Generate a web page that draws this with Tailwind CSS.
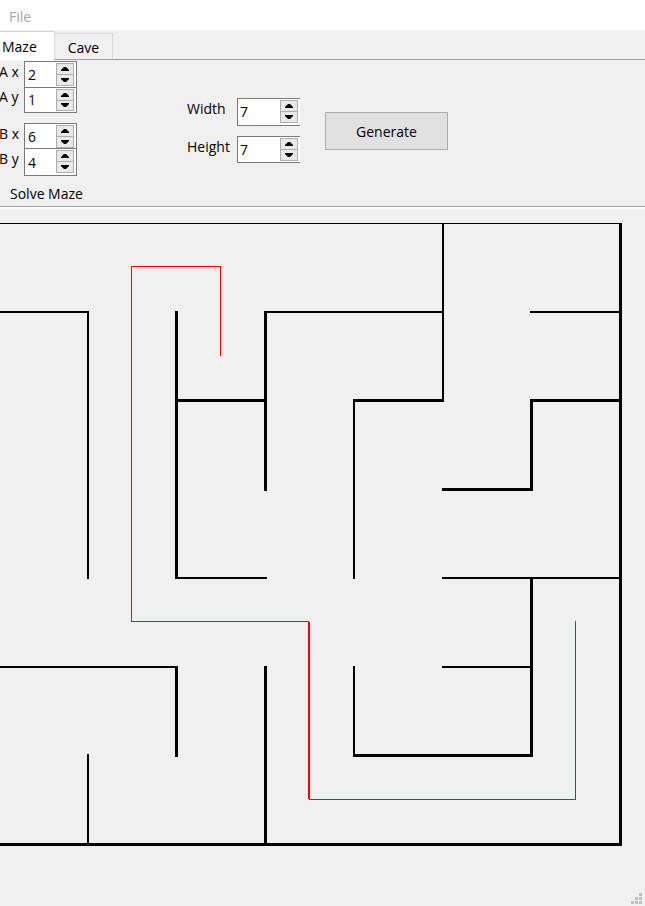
<!DOCTYPE html>
<html lang="en">
<head>
<meta charset="utf-8">
<meta name="viewport" content="width=device-width, initial-scale=1">
<title>Maze</title>
<script src="https://cdn.jsdelivr.net/npm/@tailwindcss/browser@4"></script>
</head>
<body class="min-h-screen flex flex-col bg-[#f0f0f0] text-black text-sm leading-5 font-['Open_Sans','Noto_Sans',sans-serif]">
  <nav class="h-[30px] bg-white flex items-center pl-[9px] pt-1">
    <button type="button" class="text-[#a5a5a5]">File</button>
  </nav>

  <div role="tablist" class="h-[30px] pt-px flex items-end border-b border-[#a0a0a0]">
    <button type="button" role="tab" aria-selected="true" class="h-[30px] w-[55px] -mb-[2px] bg-white border-t border-r border-[#d9d9d9] pl-[2px] text-left">Maze</button>
    <button type="button" role="tab" aria-selected="false" class="h-[26px] w-[58px] border-t border-r border-[#d9d9d9] pt-[2px]">Cave</button>
  </div>

  <main class="flex-1 flex flex-col">
    <section class="h-[146px] pt-px flex items-start" aria-label="Maze settings">
      <div class="w-[187px] shrink-0">
        <form class="flex flex-col">
          <div class="flex h-[26px]">
            <label for="ax" class="w-6 pt-px -ml-px mr-px whitespace-nowrap">A x</label>
            <div class="flex w-[53px] h-[27px] bg-white border border-[#7a7a7a]">
              <input id="ax" type="number" value="2" class="w-[31px] pl-[3px] outline-none [appearance:textfield] [&::-webkit-inner-spin-button]:appearance-none">
              <span class="flex flex-col w-[18px] my-px border border-[#adadad] bg-[#e9e9e9]">
                <button type="button" aria-label="Increase A x" class="flex-1 flex items-center justify-center border-b border-[#adadad]"><svg class="w-[8px] h-1" viewBox="0 0 8 4"><path d="M0 4V3L3 0h2l3 3v1z"/></svg></button>
                <button type="button" aria-label="Decrease A x" class="flex-1 flex items-center justify-center"><svg class="w-[8px] h-1" viewBox="0 0 8 4"><path d="M0 0v1l3 3h2l3-3V0z"/></svg></button>
              </span>
            </div>
          </div>
          <div class="flex h-[26px]">
            <label for="ay" class="w-6 -ml-px mr-px whitespace-nowrap">A y</label>
            <div class="flex w-[53px] h-[26px] bg-white border border-[#7a7a7a]">
              <input id="ay" type="number" value="1" class="w-[31px] pl-[3px] text-[#000060] outline-none [appearance:textfield] [&::-webkit-inner-spin-button]:appearance-none">
              <span class="flex flex-col w-[18px] my-px border border-[#adadad] bg-[#e9e9e9]">
                <button type="button" aria-label="Increase A y" class="flex-1 flex items-center justify-center border-b border-[#adadad]"><svg class="w-[8px] h-1" viewBox="0 0 8 4"><path d="M0 4V3L3 0h2l3 3v1z"/></svg></button>
                <button type="button" aria-label="Decrease A y" class="flex-1 flex items-center justify-center"><svg class="w-[8px] h-1" viewBox="0 0 8 4"><path d="M0 0v1l3 3h2l3-3V0z"/></svg></button>
              </span>
            </div>
          </div>
          <div class="flex h-[25px] mt-[10px]">
            <label for="bx" class="w-6 pt-px -ml-px mr-px whitespace-nowrap">B x</label>
            <div class="flex w-[53px] h-[26px] bg-white border border-[#7a7a7a]">
              <input id="bx" type="number" value="6" class="w-[31px] pl-[3px] pt-[2px] outline-none [appearance:textfield] [&::-webkit-inner-spin-button]:appearance-none">
              <span class="flex flex-col w-[18px] mt-px border border-[#adadad] bg-[#e9e9e9]">
                <button type="button" aria-label="Increase B x" class="flex-1 flex items-center justify-center border-b border-[#adadad]"><svg class="w-[8px] h-1" viewBox="0 0 8 4"><path d="M0 4V3L3 0h2l3 3v1z"/></svg></button>
                <button type="button" aria-label="Decrease B x" class="flex-1 flex items-center justify-center"><svg class="w-[8px] h-1" viewBox="0 0 8 4"><path d="M0 0v1l3 3h2l3-3V0z"/></svg></button>
              </span>
            </div>
          </div>
          <div class="flex h-[28px]">
            <label for="by" class="w-6 pt-px -ml-px mr-px whitespace-nowrap">B y</label>
            <div class="flex w-[53px] h-[28px] bg-white border border-[#7a7a7a]">
              <input id="by" type="number" value="4" class="w-[31px] pl-[3px] pt-[2px] outline-none [appearance:textfield] [&::-webkit-inner-spin-button]:appearance-none">
              <span class="flex flex-col w-[18px] mt-px mb-[2px] border border-[#adadad] bg-[#e9e9e9]">
                <button type="button" aria-label="Increase B y" class="flex-1 flex items-center justify-center border-b border-[#adadad]"><svg class="w-[8px] h-1" viewBox="0 0 8 4"><path d="M0 4V3L3 0h2l3 3v1z"/></svg></button>
                <button type="button" aria-label="Decrease B y" class="flex-1 flex items-center justify-center"><svg class="w-[8px] h-1" viewBox="0 0 8 4"><path d="M0 0v1l3 3h2l3-3V0z"/></svg></button>
              </span>
            </div>
          </div>
          <button type="button" class="self-start mt-2 ml-[10px]">Solve Maze</button>
        </form>
      </div>

      <form class="flex flex-col gap-[10px] pt-[37px] w-[138px] shrink-0">
        <div class="flex h-[28px]">
          <label for="width" class="w-[50px] pt-px">Width</label>
          <div class="flex w-[63px] bg-white border border-r-0 border-[#7a7a7a]">
            <input id="width" type="number" value="7" class="w-[42px] pl-[2px] outline-none [appearance:textfield] [&::-webkit-inner-spin-button]:appearance-none">
            <span class="flex flex-col w-[18px] mt-px mb-[2px] border border-[#adadad] bg-[#e9e9e9]">
              <button type="button" aria-label="Increase width" class="flex-1 flex items-center justify-center border-b border-[#adadad]"><svg class="w-[8px] h-1" viewBox="0 0 8 4"><path d="M0 4V3L3 0h2l3 3v1z"/></svg></button>
              <button type="button" aria-label="Decrease width" class="flex-1 flex items-center justify-center"><svg class="w-[8px] h-1" viewBox="0 0 8 4"><path d="M0 0v1l3 3h2l3-3V0z"/></svg></button>
            </span>
          </div>
        </div>
        <div class="flex h-[27px]">
          <label for="height" class="w-[50px] pt-px">Height</label>
          <div class="flex w-[63px] bg-white border border-r-0 border-[#7a7a7a]">
            <input id="height" type="number" value="7" class="w-[42px] pl-[2px] outline-none [appearance:textfield] [&::-webkit-inner-spin-button]:appearance-none">
            <span class="flex flex-col w-[18px] my-px border border-[#adadad] bg-[#e9e9e9]">
              <button type="button" aria-label="Increase height" class="flex-1 flex items-center justify-center border-b border-[#adadad]"><svg class="w-[8px] h-1" viewBox="0 0 8 4"><path d="M0 4V3L3 0h2l3 3v1z"/></svg></button>
              <button type="button" aria-label="Decrease height" class="flex-1 flex items-center justify-center"><svg class="w-[8px] h-1" viewBox="0 0 8 4"><path d="M0 0v1l3 3h2l3-3V0z"/></svg></button>
            </span>
          </div>
        </div>
      </form>

      <button type="button" class="mt-[51px] w-[123px] h-[38px] bg-[#e1e1e1] border border-[#adadad] pt-px">Generate</button>
    </section>

    <div class="h-[3px] border-t border-[#a0a0a0] bg-white"></div>

    <svg class="w-[622px] h-[623px] mt-[14px] shrink-0" viewBox="0 223 622 623" shape-rendering="crispEdges" role="img" aria-label="Maze with solution path">
      <!-- walls -->
      <path d="M0 223h622v1H0z
        M0 311h89v2H0z M264 311h180v2H264z M530 311h90v2h-90z
        M175 399h92v3h-92z M353 399h91v3h-91z M530 399h90v3h-90z
        M442 488h91v3h-91z
        M175 577h92v2h-92z M442 577h178v2H442z
        M0 666h178v2H0z M442 666h90v2h-90z
        M353 754h180v3H353z
        M0 843h622v3H0z"/>
      <path d="M87 311h2v268h-2z M87 754h2v90h-2z
        M175 311h3v268h-3z M175 666h3v91h-3z
        M264 311h3v180h-3z M264 666h3v178h-3z
        M353 399h2v180h-2z M353 666h2v91h-2z
        M442 223h2v179h-2z
        M530 399h3v92h-3z M530 577h3v180h-3z
        M619 223h3v623h-3z"/>
      <!-- solution -->
      <path fill="#f00" d="M131 266h90v1h-90z M220 266h1v90h-1z M131 266h1v356h-1z M131 621h178v1H131z M308 622h2v177h-2z M309 799h267v1H309z M575 621h1v179h-1z"/>
    </svg>

    <footer class="mt-auto flex justify-end pr-[3px] pb-[2px]">
      <svg class="w-[11px] h-[11px]" viewBox="0 0 11 11" fill="#bfbfbf" shape-rendering="crispEdges" aria-hidden="true"><path d="M8 0h3v3H8zM4 4h3v3H4zM8 4h3v3H8zM0 8h3v3H0zM4 8h3v3H4zM8 8h3v3H8z"/></svg>
    </footer>
  </main>
</body>
</html>
